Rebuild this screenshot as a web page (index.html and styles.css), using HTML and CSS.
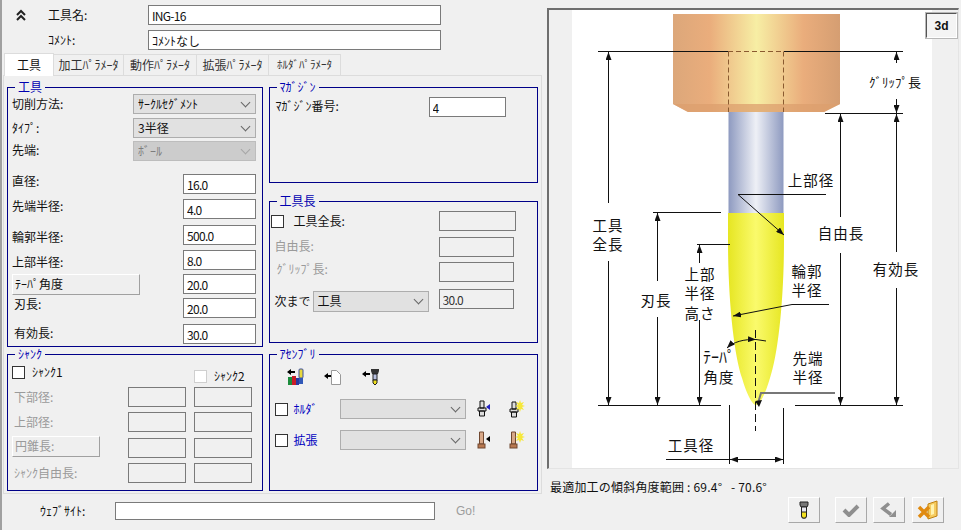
FILE: index.html
```html
<!DOCTYPE html>
<html lang="ja">
<head>
<meta charset="utf-8">
<title>工具</title>
<link rel="stylesheet" href="styles.css">
</head>
<body>
<div class="app">
  <div class="left">
    <div class="head">
      <svg class="collapse" width="14" height="14" viewBox="0 0 14 14"><path d="M3 7l4-4 4 4M3 12l4-4 4 4" fill="none" stroke="#222" stroke-width="2"/></svg>
      <span class="head-label">工具名:</span>
      <input class="text head-input val" value="ING-16">
      <span></span>
      <span class="head-label">ｺﾒﾝﾄ:</span>
      <input class="text head-input" value="ｺﾒﾝﾄなし">
    </div>
    <div class="tabs">
      <div class="tab active">工具</div>
      <div class="tab t70">加工ﾊﾟﾗﾒｰﾀ</div>
      <div class="tab t73">動作ﾊﾟﾗﾒｰﾀ</div>
      <div class="tab t72">拡張ﾊﾟﾗﾒｰﾀ</div>
      <div class="tab t72 small">ﾎﾙﾀﾞﾊﾟﾗﾒｰﾀ</div>
    </div>
    <div class="panel">
      <div class="col col-a">
        <section class="group g-tool">
          <h3 class="legend">工具</h3>
          <div class="row"><span>切削方法:</span><span class="sel w123"><select><option>ｻｰｸﾙｾｸﾞﾒﾝﾄ</option></select></span></div>
          <div class="row"><span>ﾀｲﾌﾟ:</span><span class="sel w123"><select><option>3半径</option></select></span></div>
          <div class="row"><span class="up2">先端:</span><span class="sel w123 off"><select disabled><option>ﾎﾞｰﾙ</option></select></span></div>
          <div class="row"><span class="up6">直径:</span><input class="text w73 val" value="16.0"></div>
          <div class="row"><span class="up6">先端半径:</span><input class="text w73 val" value="4.0"></div>
          <div class="row"><span class="down">輪郭半径:</span><input class="text w73 val" value="500.0"></div>
          <div class="row"><span class="down">上部半径:</span><input class="text w73 val" value="8.0"></div>
          <div class="row"><button class="btn w128">ﾃｰﾊﾟ角度</button><input class="text w73 val" value="20.0"></div>
          <div class="row"><span class="ind up8">刃長:</span><input class="text w73 val" value="20.0"></div>
          <div class="row"><span class="ind up2">有効長:</span><input class="text w73 val" value="30.0"></div>
        </section>
        <section class="group g-shank">
          <h3 class="legend">ｼｬﾝｸ</h3>
          <div class="chk-line span2"><input type="checkbox" class="chk"><span>ｼｬﾝｸ1</span></div>
          <div class="chk-line"><input type="checkbox" class="chk chk-off" disabled><span>ｼｬﾝｸ2</span></div>
          <span class="dim lab">下部径:</span><input class="text blank" disabled><input class="text blank" disabled>
          <span class="dim lab">上部径:</span><input class="text blank" disabled><input class="text blank" disabled>
          <button class="btn dim w88" disabled>円錐長:</button><input class="text blank" disabled><input class="text blank" disabled>
          <span class="dim lab thin">ｼｬﾝｸ自由長:</span><input class="text blank" disabled><input class="text blank" disabled>
        </section>
      </div>
      <div class="col col-b">
        <section class="group g-mag">
          <h3 class="legend">ﾏｶﾞｼﾞﾝ</h3>
          <span class="mag-label">ﾏｶﾞｼﾞﾝ番号:</span>
          <input class="text w77 val" value="4">
        </section>
        <section class="group g-len">
          <h3 class="legend">工具長</h3>
          <div class="chk-line gap10"><input type="checkbox" class="chk"><span>工具全長:</span></div>
          <input class="text blank w77" disabled>
          <span class="dim lab5">自由長:</span>
          <input class="text blank w75" disabled>
          <span class="dim lab7">ｸﾞﾘｯﾌﾟ長:</span>
          <input class="text blank w75" disabled>
          <div class="next"><span>次まで</span><span class="sel w116"><select><option>工具</option></select></span></div>
          <input class="text blank w75 val" disabled value="30.0">
        </section>
        <section class="group g-asm">
          <h3 class="legend">ｱｾﾝﾌﾞﾘ</h3>
          <div class="asm-tools">
            <svg width="18" height="18" viewBox="0 0 18 18"><path d="M1 4l4-3v2h4v2H5v2z" fill="#000"/><rect x="2" y="9" width="4" height="8" fill="#1c8c3c"/><rect x="6" y="8" width="4" height="9" fill="#c81e28"/><rect x="10" y="10" width="3" height="7" fill="#2838a0"/><rect x="13" y="1" width="4" height="9" rx="1" fill="#e8d83c" stroke="#3c50a0"/><rect x="13" y="10" width="4" height="6" fill="#3058b8"/></svg>
            <svg width="18" height="18" viewBox="0 0 18 18"><path d="M0 8l4-3v2h4v2H4v2z" fill="#000"/><path d="M7.500 2.500h5l4 4v10h-9z" fill="#fff" stroke="#999"/></svg>
            <svg width="18" height="18" viewBox="0 0 18 18"><path d="M0 6l4-3v2h4v2H4v2z" fill="#000"/><path d="M9 1h8v2l-1 3h-6L9 3z" fill="#333"/><rect x="11" y="6" width="4" height="6" fill="#b8c0e0" stroke="#222"/><path d="M11 12h4v3l-2 2-2-2z" fill="#f0e020" stroke="#222"/></svg>
          </div>
          <div class="asm-row">
            <input type="checkbox" class="chk"><span class="link">ﾎﾙﾀﾞ</span>
            <span class="sel w126"><select><option></option></select></span>
            <svg class="ico1" width="14" height="18" viewBox="0 0 14 18"><path d="M3 1h4v7H3zM1 8h8v3H1zM2.500 11h5v5h-5z" fill="#ddd" stroke="#111"/><path d="M9 7l4-3v6z" fill="#2020c0"/></svg>
            <svg class="ico2" width="16" height="18" viewBox="0 0 16 18"><path d="M3 2h4v7H3zM1 9h8v3H1zM2.500 12h5v5h-5z" fill="#ddd" stroke="#111"/><path d="M11 0l1 3 3-1-2 3 3 1-3 1 2 3-3-1-1 3-1-3-3 1 2-3-3-1 3-1-2-3 3 1z" fill="#f6e83a"/></svg>
          </div>
          <div class="asm-row">
            <input type="checkbox" class="chk"><span class="link">拡張</span>
            <span class="sel w126"><select><option></option></select></span>
            <svg class="ico1" width="14" height="18" viewBox="0 0 14 18"><path d="M2.500 1h4v12h-4z" fill="#d8a888" stroke="#704830"/><rect x="1" y="13" width="7" height="4" fill="#b87850" stroke="#704830"/><path d="M9 8l4-3v6z" fill="#000"/></svg>
            <svg class="ico2" width="16" height="18" viewBox="0 0 16 18"><path d="M2.500 1h4v12h-4z" fill="#d8a888" stroke="#704830"/><rect x="1" y="13" width="7" height="4" fill="#b87850" stroke="#704830"/><path d="M11 0l1 3 3-1-2 3 3 1-3 1 2 3-3-1-1 3-1-3-3 1 2-3-3-1 3-1-2-3 3 1z" fill="#f6e83a"/></svg>
          </div>
        </section>
      </div>
    </div>
    <div class="web">
      <span>ｳｪﾌﾞｻｲﾄ:</span>
      <input class="text web-input">
      <span class="go">Go!</span>
    </div>
  </div>
  <div class="right">
    <div class="frame">
      <svg class="diagram" width="360" height="458" viewBox="572 10 360 458">
        <defs>
          <linearGradient id="holder"><stop offset="0" stop-color="#dca77a"/><stop offset=".22" stop-color="#eaad7c"/><stop offset=".5" stop-color="#f7eea4"/><stop offset=".78" stop-color="#eaad7c"/><stop offset="1" stop-color="#d59e72"/></linearGradient>
          <linearGradient id="shank"><stop offset="0" stop-color="#8e9ac0"/><stop offset=".5" stop-color="#eef0f6"/><stop offset="1" stop-color="#8e9ac0"/></linearGradient>
          <linearGradient id="blade"><stop offset="0" stop-color="#e6e622"/><stop offset=".5" stop-color="#fafa6c"/><stop offset="1" stop-color="#e6e622"/></linearGradient>
          <marker id="a" viewBox="0 0 8 6" refX="8" refY="3" markerWidth="8" markerHeight="6" markerUnits="userSpaceOnUse" orient="auto-start-reverse"><path d="M0 0L8 3L0 6z" fill="#111"/></marker>
        </defs>
        <path d="M673 14H840V104L824 112H688L673 104Z" fill="url(#holder)"/>
        <path d="M673 104H840L824 112H688Z" fill="#dc9f6e" opacity=".75"/>
        <rect x="728.500" y="112" width="55" height="102" fill="url(#shank)"/>
        <path d="M728 213H784V240C784 300 778 355 770 378C766 392 760 405 756 405C752 405 746 392 742 378C734 355 728 300 728 240Z" fill="url(#blade)"/>
        <g fill="none" stroke="#111">
          <path d="M598 51.500H728M784 51.500H903M825 113.500H903M653 212.500H721M697 244.500H730M598 405.500H721M795 405.500H903"/>
          <path d="M608.500 203V52" marker-end="url(#a)"/>
          <path d="M608.500 261V405" marker-end="url(#a)"/>
          <path d="M896.500 63V52" marker-end="url(#a)"/>
          <path d="M896.500 99V113" marker-end="url(#a)"/>
          <path d="M896.500 252V114" marker-end="url(#a)"/>
          <path d="M896.500 288V405" marker-end="url(#a)"/>
          <path d="M840.500 217V114" marker-end="url(#a)"/>
          <path d="M840.500 253V405" marker-end="url(#a)"/>
          <path d="M657.500 281V213" marker-end="url(#a)"/>
          <path d="M657.500 317V405" marker-end="url(#a)"/>
          <path d="M699.500 263V245" marker-end="url(#a)"/>
          <path d="M699.500 320V405" marker-end="url(#a)"/>
          <path d="M826 194.500H738L784 235" marker-end="url(#a)"/>
          <path d="M829 304.500H792L733 316" marker-end="url(#a)"/>
          <path d="M727 348C733 342 744 339 756 339.500" marker-start="url(#a)" marker-end="url(#a)"/>
          <path d="M756 339.500L766 341"/>
          <path d="M755.500 330V431" stroke-dasharray="8 4"/>
          <path d="M729.500 405V464M783.500 408V464M666 459.500H729"/>
          <path d="M730 459.500H783" marker-start="url(#a)" marker-end="url(#a)"/>
          <path d="M728.500 51.500V112M783.500 51.500V112" stroke="#8a5a30" stroke-dasharray="5 3"/>
          <path d="M728 51.500H784" stroke="#8a5a30" stroke-dasharray="5 3"/>
        </g>
        <path d="M835 393H761L758 403" fill="none" stroke="#777" stroke-width="2"/>
        <path d="M755 401l7-1-3 7z" fill="#111"/>
        <g class="dia">
          <text><tspan x="608" y="231">工具</tspan><tspan x="608" y="250">全長</tspan></text>
          <text class="sm" x="895" y="87">ｸﾞﾘｯﾌﾟ長</text>
          <text x="811" y="186">上部径</text>
          <text x="841" y="239">自由長</text>
          <text x="896" y="275">有効長</text>
          <text x="656" y="306">刃長</text>
          <text><tspan x="700" y="280">上部</tspan><tspan x="700" y="299">半径</tspan><tspan x="700" y="319">高さ</tspan></text>
          <text><tspan x="807" y="277">輪郭</tspan><tspan x="807" y="296">半径</tspan></text>
          <text class="lg" x="719" y="363">ﾃｰﾊﾟ</text><text x="719" y="383">角度</text>
          <text><tspan x="808" y="364">先端</tspan><tspan x="808" y="383">半径</tspan></text>
          <text x="691" y="451">工具径</text>
        </g>
      </svg>
      <button class="btn3d">3d</button>
    </div>
    <div class="status">最適加工の傾斜角度範囲 : 69.4°&nbsp;&nbsp; - 70.6°</div>
    <div class="actions">
      <button class="ibtn"><svg width="16" height="18" viewBox="0 0 16 18"><path d="M4 1h8v3l-1 2H5L4 4z" fill="#777" stroke="#222"/><path d="M5.500 6h5v9l-1 2h-3l-1-2z" fill="#e8e8f0" stroke="#222"/><path d="M5.500 11h5v4l-1 2h-3l-1-2z" fill="#f2e020" stroke="#222"/></svg></button>
      <button class="ibtn gap-b"><svg width="18" height="14" viewBox="0 0 18 14"><path d="M2 7l5 5L16 3" fill="none" stroke="#8f8f8f" stroke-width="4"/></svg></button>
      <button class="ibtn gap-c"><svg width="18" height="16" viewBox="0 0 18 16"><path d="M9 1.500L3 6.500l8 6" fill="none" stroke="#8f8f8f" stroke-width="3.500"/><path d="M16 8v7H9z" fill="#8f8f8f"/></svg></button>
      <button class="ibtn gap-d"><svg width="22" height="20" viewBox="0 0 22 20"><path d="M11 4l9-3v15l-9 3z" fill="#f6cc60" stroke="#c08010"/><path d="M14 5l3-1v10l-3 1z" fill="#fff3b0"/><path d="M2 7l10 10M12 7L2 17" stroke="#e08a10" stroke-width="3.500"/></svg></button>
    </div>
  </div>
</div>
</body>
</html>
```
FILE: styles.css
```css
* { box-sizing: border-box; }
html, body { margin: 0; height: 100%; }
body {
  width: 961px; height: 530px; overflow: hidden;
  background: #f0f0f0; color: #111;
  font: 12px/1.2 "Noto Sans CJK JP", sans-serif;
}
input, select, button { font: inherit; color: inherit; margin: 0; }
.app { display: flex; height: 530px; border-left: 2px solid #a0a0a0; }
.left { width: 545px; flex: none; }
.right { flex: 1; padding-top: 8px; }

.head {
  display: grid; grid-template-columns: 46px 100px 293px;
  grid-template-rows: 20px 18px; row-gap: 6px;
  align-items: center; padding-top: 5px; height: 52px;
}
.collapse { margin-left: 12px; }
.head-input { height: 100%; padding-top: 0; }
.head-label { line-height: 14px; }

.tabs { display: flex; align-items: flex-end; height: 23px; margin-left: 2px; position: relative; z-index: 1; }
.tab {
  width: 50px; height: 21px; background: #f0f0f0;
  border: 1px solid #dcdcdc; border-bottom: 0; border-left: 0;
  display: flex; align-items: center; justify-content: center; color: #333;
}
.tab.active { height: 23px; background: #fff; border-left: 1px solid #dcdcdc; border-bottom: 0; color: #111; margin-bottom: -1px; }
.t70 { width: 70px; } .t73 { width: 73px; } .t72 { width: 72px; }
.small { font-size: 11px; }

.panel {
  margin-left: 1px; width: 539px; height: 419px;
  border: 1px solid #dcdcdc; padding: 11px 0 0 3px;
  display: flex; gap: 5.500px;
}
.col { display: flex; flex-direction: column; }
.col-a { width: 256px; gap: 7px; }
.col-b { width: 269px; }

.group { border: 1px solid #000088; position: relative; }
.legend {
  position: absolute; left: 7px; top: -8px; margin: 0;
  padding: 0 3px; background: #f0f0f0; color: #0000b0;
  font: inherit; line-height: 14px;
}
.g-tool {
  height: 260px; padding: 6px 6px 0 4px; display: grid;
  grid-template-rows: 24px 23px 33px 25px 26px 25px 24px 24px 26px 20px;
}
.row { display: flex; justify-content: space-between; align-items: center; height: 20px; }
.down { margin-top: 4px; }
.up2 { margin-bottom: 2px; }
.up6 { margin-bottom: 6px; }
.up8 { margin-bottom: 8px; }
.ind { margin-left: 2px; }

.text {
  border: 1px solid #7a7a7a; background: #fff; height: 20px;
  padding: 0 3px; outline: 0; border-radius: 0; display: block;
}
.val { letter-spacing: -.7px; }
.blank, .text:disabled { background: #f0f0f0; color: #333; }
.w73 { width: 73px; } .w75 { width: 75px; } .w77 { width: 77px; }

.sel { position: relative; display: block; height: 20px; }
.sel select {
  appearance: none; width: 100%; height: 100%; display: block;
  background: #e1e1e1; border: 1px solid #adadad; border-radius: 0;
  padding: 0 0 0 4px; opacity: 1;
}
.sel::after {
  content: ""; position: absolute; right: 7px; top: 5px; width: 6px; height: 6px;
  border: solid #666; border-width: 0 1px 1px 0; transform: rotate(45deg);
}
.off select { background: #cccccc; border-color: #bdbdbd; color: #7d7d7d; }
.off::after { border-color: #a6a6a6; }
.w123 { width: 123px; } .w116 { width: 116px; height: 21px; } .w126 { width: 126px; }

.btn {
  background: #efefef; height: 21px; padding: 0 0 0 2px; text-align: left;
  border: 1px solid; border-color: #fff #a0a0a0 #a0a0a0 #fff;
}
.w128 { width: 128px; } .w88 { width: 88px; margin-top: -2px; height: 21px; }
.dim, .btn.dim { color: #9a9a9a; }

.g-shank {
  height: 137px; padding: 11px 0 0 4px; display: grid;
  grid-template-columns: 108px 58px 58px; column-gap: 8px;
  grid-template-rows: 21px 25px 26px 25px 20px; align-items: center;
}
.g-shank .text { width: 58px; align-self: start; }
.g-shank .btn { align-self: start; }
.span2 { grid-column: span 2; align-self: start; }
.lab { margin-left: 2px; align-self: start; line-height: 20px; }
.thin { font-size: 12px; }
.chk-line { display: flex; align-items: center; gap: 7px; height: 13px; }
.chk-line.gap10 { gap: 10px; }
.chk { appearance: none; width: 13px; height: 13px; margin: 0; flex: none; background: #fff; border: 1px solid #333; border-radius: 0; display: block; }
.chk-off { border-color: #cfcfcf; }

.g-mag { height: 96px; padding: 9px 31px 0 6px; display: flex; justify-content: space-between; align-items: flex-start; }
.mag-label { line-height: 18px; }

.g-len {
  height: 142px; margin-top: 18px; padding: 9px 0 0 1px; display: grid;
  grid-template-columns: 168px 80px; grid-template-rows: 26px 25px 27px 22px; align-items: start;
}
.g-len .chk-line { height: 20px; }
.lab5 { margin-left: 4px; line-height: 18px; }
.lab7 { margin-left: 6px; line-height: 14px; }
.next { display: flex; align-items: center; gap: 2px; margin-top: 2px; margin-left: 4px; }
.next span:first-child { width: 36px; }

.g-asm { height: 137px; margin-top: 11px; padding: 13px 0 0 5px; }
.asm-tools { display: flex; gap: 20px; margin-left: 11px; height: 18px; margin-bottom: 13px; }
.asm-row { display: flex; align-items: center; height: 20px; margin-bottom: 11px; }
.link { color: #0000c0; margin-left: 6px; width: 46px; text-decoration: none; }
.ico1 { margin-left: 11px; } .ico2 { margin-left: 18px; }

.web { display: grid; grid-template-columns: 75px 320px auto; align-items: center; margin-top: 8px; padding-left: 38px; height: 18px; }
.web-input { height: 18px; }
.go { color: #9c9c9c; margin-left: 21px; font-family: "Liberation Sans", sans-serif; }

.frame {
  position: relative; width: 412px; height: 461px; padding-left: 23px;
  border: 2px solid #e4e4e4; border-top-color: #6e6e6e; border-left-color: #6e6e6e;
  border-bottom-width: 1px; border-right-width: 1px;
}
.diagram { display: block; background: #fff; }
.btn3d {
  position: absolute; top: 3px; right: 1px; width: 31px; height: 25px; padding: 0;
  background: #f4f4f4; border: 1px solid; border-color: #555 #fff #fff #555;
  outline: 1px solid #b8b8b8;
  font: bold 12px "Liberation Sans", sans-serif;
}
.dia text { font-size: 14.500px; text-anchor: middle; letter-spacing: 1px; fill: #111; }
.dia .sm { font-size: 13px; letter-spacing: 0; }
.dia .lg { font-size: 16px; letter-spacing: 0; }

.status { margin-left: 3px; margin-top: 11px; line-height: 14px; letter-spacing: .2px; }
.actions { display: flex; margin: 3px 0 0 241px; }
.ibtn {
  width: 32px; height: 26px; padding: 0; background: #f0f0f0;
  border: 1px solid; border-color: #fff #a8a8a8 #a8a8a8 #fff;
  display: flex; align-items: center; justify-content: center;
}
.gap-b { margin-left: 15px; }
.gap-c { margin-left: 6px; }
.gap-d { margin-left: 7px; }
```
